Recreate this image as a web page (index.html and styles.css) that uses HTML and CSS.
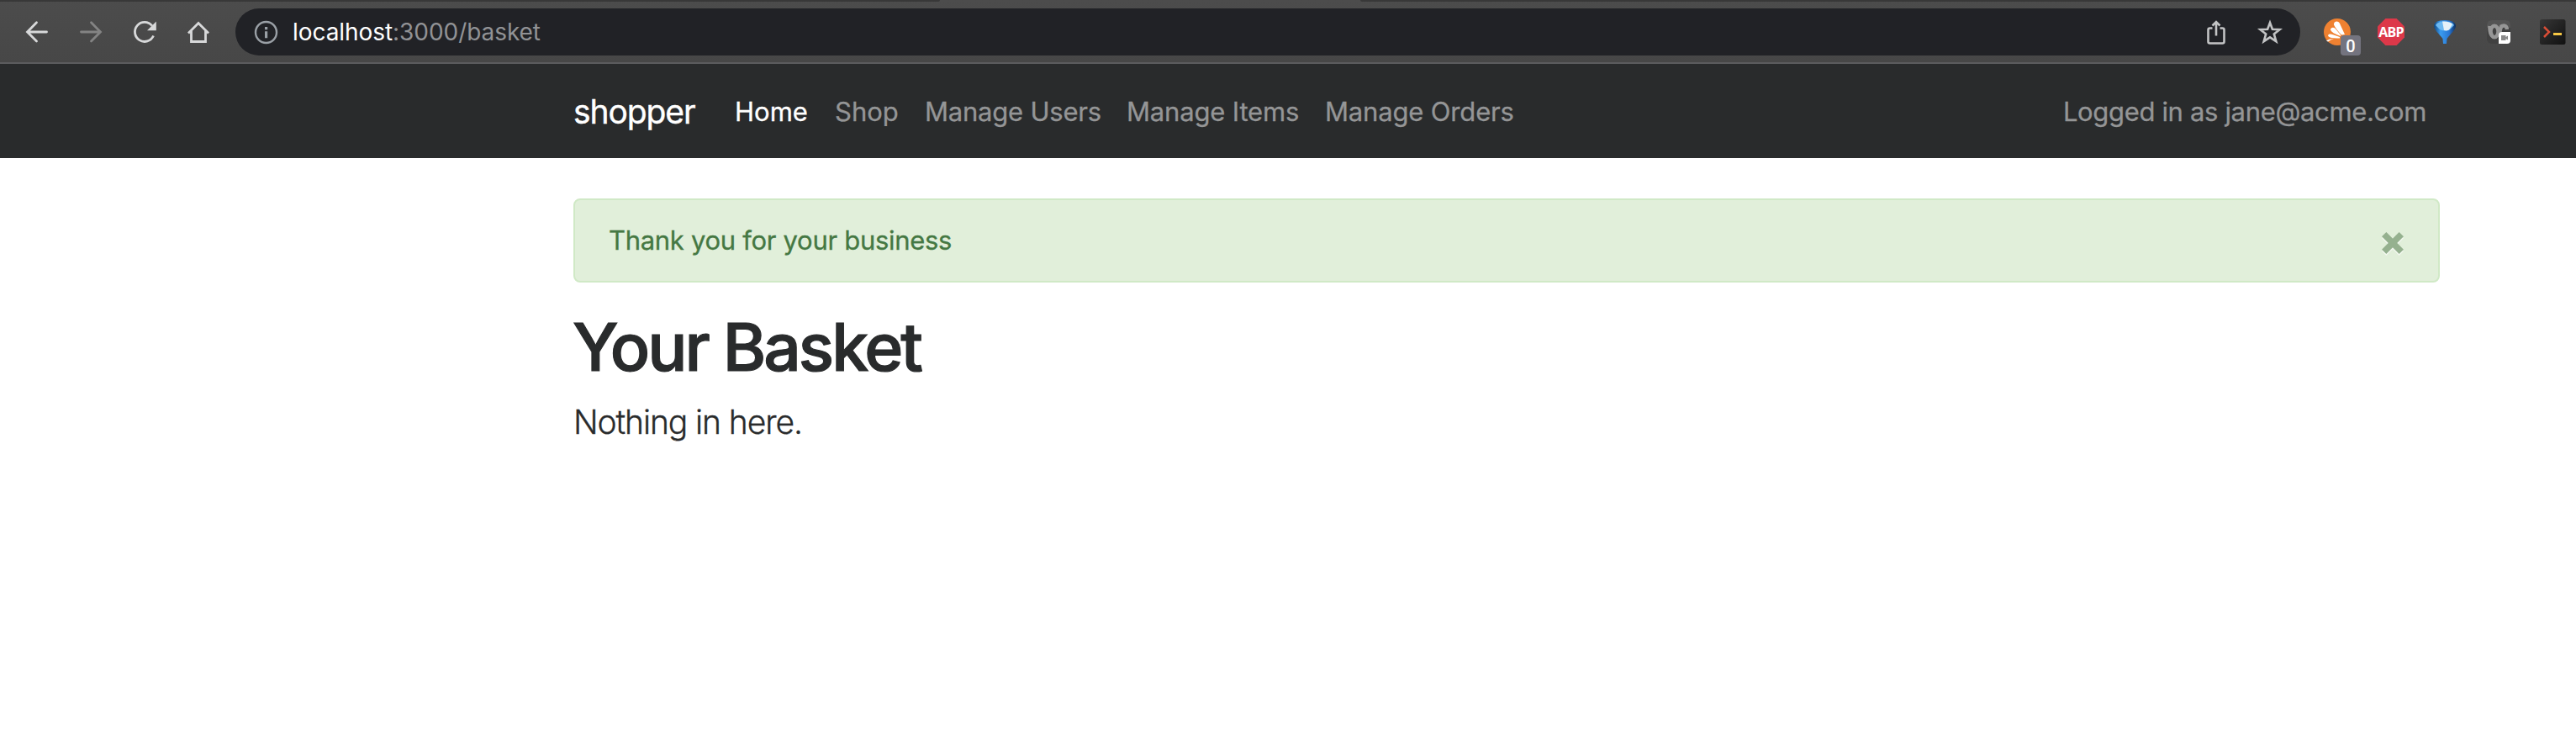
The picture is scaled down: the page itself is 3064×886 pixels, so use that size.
FILE: index.html
```html
<!DOCTYPE html>
<html lang="en">
<head>
<meta charset="utf-8">
<title>Your Basket</title>
<link rel="stylesheet" href="styles.css">
</head>
<body>
<header class="toolbar">
  <div class="tabs"><span class="tab tab-left"></span><span class="tab tab-right"></span></div>
  <div class="toolbar-row">
    <div class="controls">
      <svg class="icon" viewBox="0 0 32 32"><path stroke-linecap="round" d="M27.500 16H5M15.500 4.800L4.500 16L15.500 27" /></svg>
      <svg class="icon dim" viewBox="0 0 32 32"><path stroke-linecap="round" d="M4.500 16H27M16.500 4.800L27.500 16L16.500 27" /></svg>
      <svg class="icon" viewBox="0 0 32 32"><path d="M26.500 20.500A11.500 11.500 0 1 1 24.800 8.600" /><path class="solid" d="M29.800 3.500V14.300H19Z" /></svg>
      <svg class="icon" viewBox="0 0 32 32"><path d="M7.500 14V27.500H24.500V14M4 17.500L16 5.500L28 17.500" /></svg>
    </div>
    <div class="omnibox">
      <svg class="icon info" viewBox="0 0 32 32"><circle cx="16.500" cy="16.500" r="12.500" /><path class="solid" d="M15 10h3.200v3.200H15zM15 15.200h3.200v8H15z" /></svg>
      <span class="url"><span class="host">localhost</span><span class="path">:3000/basket</span></span>
      <svg class="icon share" viewBox="0 0 32 32"><path d="M11.500 11.500H8.500Q6.500 11.500 6.500 13.500V27.500Q6.500 29.500 8.500 29.500H23.500Q25.500 29.500 25.500 27.500V13.500Q25.500 11.500 23.500 11.500H20.500M16 20.500V4M11.500 8.500L16 4L20.500 8.500" /></svg>
      <svg class="icon star" viewBox="0 0 32 32"><path d="M16 5L18.900 12.800L27.500 13.200L20.800 18.400L23.300 27.200L16 22.300L8.700 27.200L11.200 18.400L4.500 13.200L13.100 12.800Z" /></svg>
    </div>
    <div class="extensions">
      <span class="ext"><svg viewBox="0 0 32 32"><circle cx="16" cy="16" r="16" fill="#ef8131"/><path fill="#fff" d="M12 7.500C11.500 3 17 2 18.800 5.500L25 19L21 19.500Q14 12 12 7.500ZM8 13.500C8 10.500 11.500 10 13.500 11.800L20 19.500V21Q9 17 8 13.500ZM5 20.500C5 18 8.500 18 11 19.200L19 22V23.500Q6 24 5 20.500ZM3 26.500Q7 23.800 12 24.300Q9 24.500 5 27.500Z"/></svg><b class="badge">0</b></span>
      <span class="ext"><svg viewBox="0 0 32 32"><path fill="#dd3849" d="M9.400 0H22.600L32 9.400V22.600L22.600 32H9.400L0 22.600V9.400Z"/></svg><b class="abp">ABP</b></span>
      <span class="ext"><svg viewBox="0 0 32 32"><defs><linearGradient id="gem" x1="0" x2="1"><stop offset="0" stop-color="#12457c"/><stop offset=".3" stop-color="#3a9cf0"/><stop offset=".7" stop-color="#2a77d4"/><stop offset="1" stop-color="#0c2f5e"/></linearGradient></defs><path fill="url(#gem)" d="M3 8Q4 2 16 2T29 8C29.500 13 23 18 18.500 24L18 30H14L13.500 24C9 18 2.500 13 3 8Z"/><path fill="#6db9f2" d="M5 8Q7 3.500 16 3.500T27 8L22 13Q16 16 10 13Z"/><path fill="#e5f1f8" d="M13 3.500Q22 3 25 7L21 13.500Q18 15 15 14Z"/></svg></span>
      <span class="ext"><svg viewBox="0 0 32 32"><rect x="2" y="2" width="28" height="28" rx="6" fill="#414141"/><path fill="#545454" d="M8 2H24Q30 2 30 8V11H2V8Q2 2 8 2Z"/><g fill="none" stroke="#969696" stroke-width="4.500"><ellipse cx="11" cy="15.500" rx="4.500" ry="6.800"/><path d="M5.500 9Q5 16 8 20M18 10Q25 6 26 13M19 10Q16 16 19 21"/></g><path fill="#fff" d="M16 20Q16 16 20 16H30V26Q30 30 26 30H16Z"/><path fill="#8a8a8a" d="M19 20H24.500V22L27 20.500V25.500L24.500 24V26H19Z"/></svg></span>
      <span class="ext"><svg viewBox="0 0 32 32"><defs><linearGradient id="term" x1="0" y1="0" x2="1" y2="1"><stop offset="0" stop-color="#363636"/><stop offset="1" stop-color="#111"/></linearGradient></defs><rect x="1" y="1" width="30.500" height="30" rx="2.500" fill="url(#term)"/><path fill="none" stroke="#d94d36" stroke-width="2.500" d="M6 10L12 16L6 22"/><path fill="#f6c744" d="M17 17H27V20H17Z"/></svg></span>
    </div>
  </div>
</header>
<nav class="navbar">
  <div class="container">
    <a class="brand">shopper</a>
    <a class="link home active">Home</a>
    <a class="link shop">Shop</a>
    <a class="link users">Manage Users</a>
    <a class="link items">Manage Items</a>
    <a class="link orders">Manage Orders</a>
    <span class="link account">Logged in as jane@acme.com</span>
  </div>
</nav>
<main class="content">
  <div class="alert"><span class="alert-text">Thank you for your business</span>
    <svg class="close" viewBox="0 0 28 28"><path class="close-shadow" d="M3.700 5.700L24.300 26.300M24.300 5.700L3.700 26.300"/><path class="close-mark" d="M3.700 3.700L24.300 24.300M24.300 3.700L3.700 24.300"/></svg>
  </div>
  <h1 class="title">Your Basket</h1>
  <p class="lead">Nothing in here.</p>
</main>
</body>
</html>
```
FILE: styles.css
```css
* { box-sizing: border-box; }
body { margin: 0; background: #fff; color: #292b2c; font-family: Inter, "Liberation Sans", sans-serif; }
.toolbar { height: 76px; background: linear-gradient(#4c4c4c, #474747); border-bottom: 2px solid #5b5c5e; }
.tabs { display: flex; justify-content: space-between; height: 2px; }
.tab { height: 2px; background: #383838; }
.tab-left { width: 1118px; border-bottom-right-radius: 2px; }
.tab-right { width: 1446px; border-bottom-left-radius: 2px; }
.toolbar-row { display: flex; height: 72px; padding-top: 8px; }
.controls { display: flex; align-items: center; gap: 32px; width: 280px; height: 56px; padding-left: 28px; }
.icon { width: 32px; height: 32px; flex: none; fill: none; stroke: #d8d9da; stroke-width: 2.8; }
.icon .solid { fill: #d8d9da; stroke: none; }
.dim { stroke: #838383; }
.omnibox { display: flex; align-items: center; width: 2456px; height: 56px; padding: 0 20px; border-radius: 28px; background: #212226; }
.info { stroke: #9aa0a6; stroke-width: 2.4; }
.icon.info .solid { fill: #9aa0a6; }
.url { flex: 1; padding-left: 16px; font-size: 28px; line-height: 34px; letter-spacing: -0.06px; white-space: nowrap; }
.host { color: #fff; }
.path { color: #919295; }
.share { margin-right: 32px; }
.share, .star { stroke: #c3c4c5; stroke-width: 2.6; }
.extensions { display: flex; align-items: center; gap: 32px; height: 56px; padding-left: 28px; }
.ext { position: relative; width: 32px; height: 32px; flex: none; }
.ext svg { display: block; width: 32px; height: 32px; }
.badge { position: absolute; left: 20px; top: 20px; width: 24px; height: 24px; border-radius: 4px; background: #74747f; color: #fff; font: 500 20px/27px Roboto, sans-serif; text-align: center; }
.abp { position: absolute; left: 0; top: 0; width: 32px; color: #fff; font: 700 16px/32px "Open Sans", sans-serif; letter-spacing: -0.7px; text-align: center; }
.navbar { height: 112px; background: #292b2c; }
.container { display: flex; align-items: center; width: 2220px; height: 112px; margin-left: 682px; padding-top: 2px; white-space: nowrap; }
.brand { width: 192px; font-size: 39px; line-height: 60px; letter-spacing: -1.1px; color: #fff; -webkit-text-stroke: 0.4px; }
.link { font-size: 31px; line-height: 48px; color: #949596; letter-spacing: -0.16px; -webkit-text-stroke: 0.3px; }
.home { width: 119px; letter-spacing: 0; }
.shop { width: 107px; letter-spacing: 0; }
.active { color: #fff; }
.users { width: 240px; letter-spacing: -0.22px; }
.items { width: 236px; }
.account { margin-left: auto; margin-right: 16px; letter-spacing: -0.34px; }
.content { width: 2220px; margin: 48px 0 0 682px; }
.alert { display: flex; align-items: center; justify-content: space-between; height: 100px; padding: 0 40px; border: 2px solid #d0e9c6; border-radius: 8px; background: #e1efda; color: #457843; font-size: 31px; line-height: 48px; letter-spacing: -0.3px; }
.alert-text { -webkit-text-stroke: 0.3px; }
.close { width: 28px; height: 28px; margin-top: 5px; overflow: visible; fill: none; stroke-width: 7.5; }
.close-mark { stroke: #95b18f; }
.close-shadow { stroke: #f3f8f0; }
.title { margin: 33px 0 15px -1px; font-size: 78.5px; line-height: 88px; font-weight: 500; letter-spacing: -3px; -webkit-text-stroke: 1.2px; }
.lead { margin: 0; font-size: 39px; line-height: 60px; font-weight: 300; letter-spacing: -1.1px; -webkit-text-stroke: 0.3px; }
```
